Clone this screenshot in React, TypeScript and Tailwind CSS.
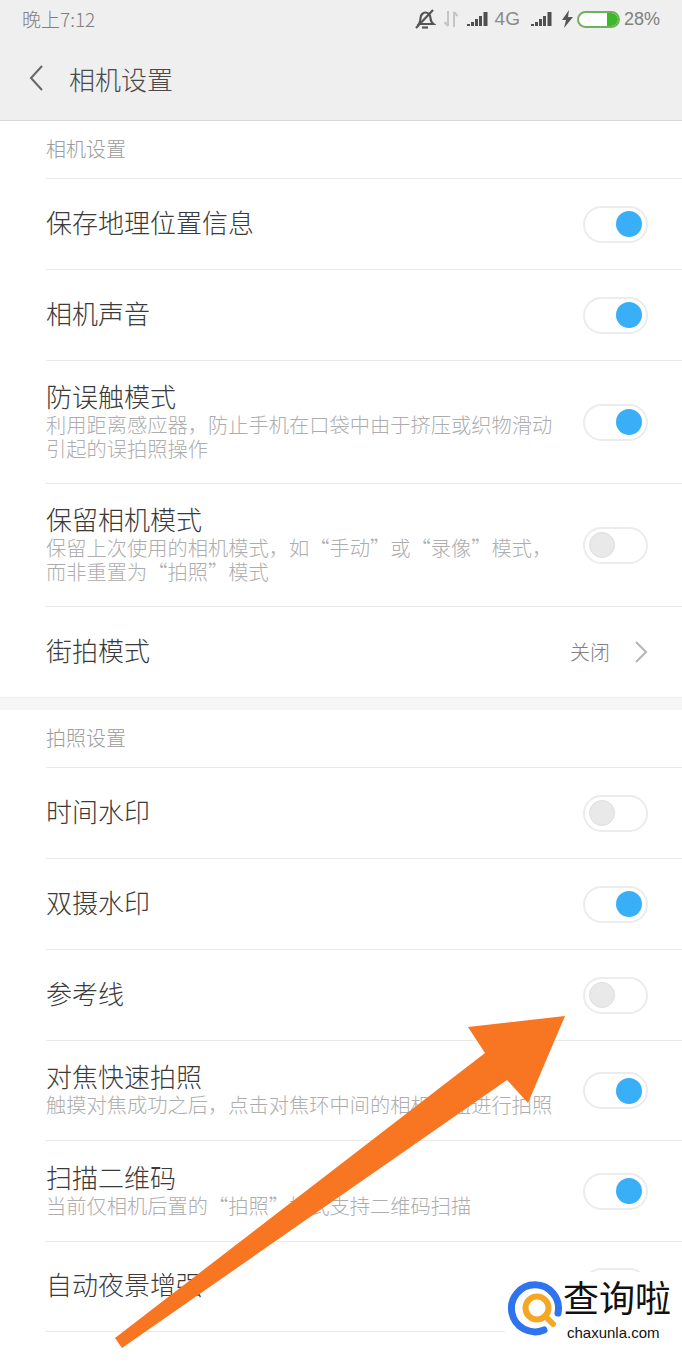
const font = { fontFamily: '"Noto Sans CJK SC", "Liberation Sans", sans-serif' };

function Toggle({ on }: { on: boolean }) {
  return (
    <div className={`w-[65px] h-[37px] rounded-full border-2 border-[#ececec] bg-white flex items-center px-[4px] shrink-0 ${on ? 'justify-end' : 'justify-start'}`}>
      {on ? (
        <div className="w-[26px] h-[26px] rounded-full bg-[#38aff6]"></div>
      ) : (
        <div className="w-[26px] h-[26px] rounded-full bg-[#e9e9e9] border border-[#dedede]"></div>
      )}
    </div>
  );
}

type RowProps = { title?: string; sub?: string[]; on?: boolean; h: string; last?: boolean; value?: string };

function Row({ title, sub, on, h, last, value }: RowProps) {
  return (
    <div className={`ml-[46px] pr-[34px] flex items-center justify-between ${h} ${last ? '' : 'border-b border-[#e9e9e9]'}`}>
      <div className="min-w-0">
        <div className="text-[26px] leading-[23px] pb-[6px] font-light text-[#3a3a3a] whitespace-nowrap">{title}</div>
        {sub?.map((s) => (
          <div key={s} className="text-[20.25px] leading-[24px] font-light text-[#adadad] whitespace-nowrap">{s}</div>
        ))}
      </div>
      {value ? (
        <div className="flex items-center gap-[24px]">
          <span className="text-[20px] font-light text-[#808080]">{value}</span>
          <svg width="14" height="22" viewBox="0 0 14 22" fill="none" stroke="#b5b5b5" strokeWidth="2"><path d="M2 1l10 10L2 21" /></svg>
        </div>
      ) : (
        <Toggle on={!!on} />
      )}
    </div>
  );
}

function SectionTitle({ text, h }: { text: string; h: string }) {
  return (
    <div className={`ml-[46px] pb-[2px] flex items-center border-b border-[#e9e9e9] text-[20px] font-light text-[#9b9b9b] ${h}`}>{text}</div>
  );
}

function Signal() {
  return (
    <svg width="21" height="16" viewBox="0 0 21 16" fill="#4f4f4f">
      <rect x="0" y="13" width="3" height="2" />
      <rect x="4" y="11" width="3" height="4" />
      <rect x="8" y="8" width="3" height="7" />
      <rect x="12" y="5" width="3" height="10" />
      <rect x="16.500" y="1" width="4" height="14" />
    </svg>
  );
}

function StatusBar() {
  return (
    <div className="h-[39px] pb-[1px] pl-[22px] pr-[22px] flex items-center justify-between text-[19px] font-light text-[#808080]">
      <span>晚上7:12</span>
      <div className="flex items-center text-[18px]">
        {/* muted bell */}
        <svg width="22" height="20" viewBox="0 0 22 20" fill="none" stroke="#555" strokeWidth="2.200">
          <path d="M5 15c1.500-2 1.500-4 1.500-6 0-3 2.500-5.500 5-5.500s5 2.500 5 5.500c0 2 .5 4 3 6z" />
          <path d="M8 18.500h6" />
          <path d="M2 19L19 1" />
        </svg>
        <svg className="ml-[7px]" width="16" height="18" viewBox="0 0 16 18" fill="none" stroke="#c4c4c4" strokeWidth="2">
          <path d="M5 1v15M1.500 12L5 16" />
          <path d="M11 17V2M14.500 6L11 2" />
        </svg>
        <div className="ml-[8px]"><Signal /></div>
        <span className="ml-[7px] text-[19px] text-[#8a8a8a]" style={{ fontFamily: '"Liberation Sans", sans-serif' }}>4G</span>
        <div className="ml-[11px]"><Signal /></div>
        <svg className="ml-[10px]" width="11" height="18" viewBox="0 0 11 18" fill="#555"><path d="M7 0L0 10h4l-2 8 9-11H6z" /></svg>
        <div className="ml-[4px] w-[43px] h-[17px] rounded-full border-2 border-[#6fb25c] flex justify-end bg-white">
          <div className="w-[11px] h-full rounded-r-full bg-[#3db82a]"></div>
        </div>
        <span className="ml-[4px] text-[#808080]" style={{ fontFamily: '"Liberation Sans", sans-serif' }}>28%</span>
      </div>
    </div>
  );
}

export default function App() {
  return (
    <div className="relative w-[682px] h-[1364px] overflow-hidden bg-white" style={font}>
      <div className="h-[121px] bg-[#efefef] border-b border-[#d8d8d8]">
        <StatusBar />
        <div className="h-[81px] pb-[3px] flex items-center pl-[29px]">
          <svg width="14" height="26" viewBox="0 0 14 26" fill="none" stroke="#666" strokeWidth="2"><path d="M13 1L2 13l11 12" /></svg>
          <span className="ml-[26px] text-[26px] font-light text-[#4a4a4a]">相机设置</span>
        </div>
      </div>

      <SectionTitle text="相机设置" h="h-[58px]" />
      <Row title="保存地理位置信息" on h="h-[91px]" />
      <Row title="相机声音" on h="h-[91px]" />
      <Row title="防误触模式" sub={['利用距离感应器，防止手机在口袋中由于挤压或织物滑动', '引起的误拍照操作']} on h="h-[123px]" />
      <Row title="保留相机模式" sub={['保留上次使用的相机模式，如“手动”或“录像”模式，', '而非重置为“拍照”模式']} h="h-[123px]" />
      <Row title="街拍模式" value="关闭" h="h-[90px]" last />

      <div className="h-[13px] bg-[#f6f6f6] border-t border-[#efefef]"></div>

      <SectionTitle text="拍照设置" h="h-[58px]" />
      <Row title="时间水印" h="h-[91px]" />
      <Row title="双摄水印" on h="h-[91px]" />
      <Row title="参考线" h="h-[91px]" />
      <Row title="对焦快速拍照" sub={['触摸对焦成功之后，点击对焦环中间的相机按钮进行拍照']} on h="h-[100px]" />
      <Row title="扫描二维码" sub={['当前仅相机后置的“拍照”模式支持二维码扫描']} on h="h-[101px]" />
      <Row title="自动夜景增强" on h="h-[90px]" />
      <Row on h="h-[90px]" />

      {/* orange arrow over the list */}
      <svg className="absolute left-0 top-0 pointer-events-none" width="682" height="1364" viewBox="0 0 682 1364">
        <path d="M565 1016L468 1027L485 1053L115 1338L122 1348L507 1080L528 1103Z" fill="#f87522" />
      </svg>

      {/* watermark */}
      <div className="absolute left-[505px] top-[1272px] w-[177px] h-[92px] bg-white flex items-start">
        <svg className="ml-[2px] mt-[8px] shrink-0" width="58" height="58" viewBox="0 0 58 58" fill="none">
          <path d="M51 33A23.500 23.500 0 1 0 37 50" stroke="#2f74ee" strokeWidth="7" strokeLinecap="round" />
          <circle cx="30" cy="28" r="11.500" stroke="#f5a623" strokeWidth="6" />
          <path d="M38 36l8 8" stroke="#f5a623" strokeWidth="6" strokeLinecap="round" />
        </svg>
        <div className="-ml-[2px] mt-[2px] flex flex-col items-start">
          <div className="text-[36px] leading-[44px] text-[#111] whitespace-nowrap" style={{ fontFamily: '"Noto Sans CJK SC", serif' }}>查询啦</div>
          <div className="ml-[4px] mt-[6px] text-[15px] leading-[18px] text-[#111]" style={{ fontFamily: '"Liberation Sans", sans-serif' }}>chaxunla.com</div>
        </div>
      </div>
    </div>
  );
}
